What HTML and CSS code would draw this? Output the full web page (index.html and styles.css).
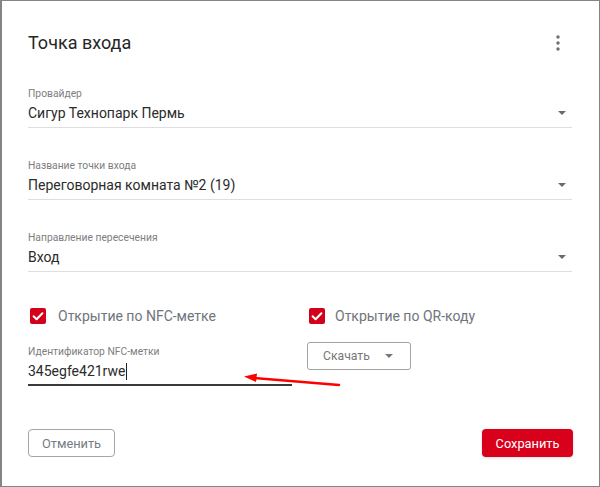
FILE: index.html
```html
<!DOCTYPE html>
<html lang="ru">
<head>
<meta charset="utf-8">
<title>Точка входа</title>
<link rel="stylesheet" href="styles.css">
</head>
<body>
<div class="dialog">
  <div class="head">
    <h1 class="title">Точка входа</h1>
    <svg class="kebab" width="4" height="16" viewBox="0 0 4 16"><circle cx="2" cy="2" r="1.7"/><circle cx="2" cy="8" r="1.7"/><circle cx="2" cy="14" r="1.7"/></svg>
  </div>

  <div class="field">
    <div class="label">Провайдер</div>
    <div class="value-row"><span class="value">Сигур Технопарк Пермь</span><span class="caret"></span></div>
  </div>
  <div class="field">
    <div class="label">Название точки входа</div>
    <div class="value-row"><span class="value">Переговорная комната №2 (19)</span><span class="caret"></span></div>
  </div>
  <div class="field">
    <div class="label">Направление пересечения</div>
    <div class="value-row"><span class="value">Вход</span><span class="caret"></span></div>
  </div>

  <div class="options">
    <div class="col">
      <label class="check">
        <svg class="box" width="16" height="16" viewBox="0 0 16 16"><rect width="16" height="16" rx="2"/><path d="M3.6 8.2l3 3 5.8-6"/></svg>
        <span>Открытие по NFC-метке</span>
      </label>
      <div class="nfc">
        <div class="label">Идентификатор NFC-метки</div>
        <div class="value-row"><span class="value">345egfe421rwe</span><span class="cursor"></span></div>
      </div>
    </div>
    <div class="col">
      <label class="check">
        <svg class="box" width="16" height="16" viewBox="0 0 16 16"><rect width="16" height="16" rx="2"/><path d="M3.6 8.2l3 3 5.8-6"/></svg>
        <span>Открытие по QR-коду</span>
      </label>
      <button class="download">Скачать <span class="mini-caret"></span></button>
    </div>
  </div>

  <div class="footer">
    <button class="btn-cancel">Отменить</button>
    <button class="btn-save">Сохранить</button>
  </div>

  <svg class="annot" width="600" height="487" viewBox="0 0 600 487">
    <path d="M339 385 L254 378" stroke="#f00" stroke-width="2.5" fill="none" stroke-linecap="round"/>
    <path d="M244 376.5 L257 373.5 L256 382 Z" fill="#f00"/>
  </svg>
</div>
</body>
</html>
```

FILE: styles.css
```css
html, body {
  margin: 0;
  padding: 0;
  background: #fff;
}
body {
  font-family: Roboto, "Noto Sans", "Liberation Sans", sans-serif;
  color: #333;
}
.dialog {
  position: relative;
  box-sizing: border-box;
  width: 600px;
  height: 487px;
  border: 1px solid #858585;
  border-left-width: 2px;
  padding: 30px 27px 29px 26px;
  display: flex;
  flex-direction: column;
}
.head {
  display: flex;
  justify-content: space-between;
  align-items: center;
  height: 24px;
  margin-bottom: 32px;
}
.title {
  margin: 0;
  font-size: 18px;
  line-height: 24px;
  font-weight: 400;
  color: #262626;
}
.kebab {
  fill: #6f6f6f;
  margin-right: 12px;
}
.field {
  border-bottom: 1px solid #dedede;
  padding-bottom: 4px;
  margin-bottom: 31px;
}
.field:nth-of-type(4) {
  margin-bottom: 34px;
}
.label {
  font-size: 10.3px;
  line-height: 14px;
  color: #7d7d7d;
  margin-bottom: 2px;
}
.value-row {
  display: flex;
  align-items: center;
  height: 20px;
}
.value {
  font-size: 14px;
  line-height: 20px;
  color: #2b2b2b;
}
.caret {
  margin-left: auto;
  margin-right: 6px;
  width: 0;
  height: 0;
  border-left: 4.5px solid transparent;
  border-right: 4.5px solid transparent;
  border-top: 4.5px solid #6a6a6a;
}
.options {
  display: grid;
  grid-template-columns: 264px 1fr;
  column-gap: 15px;
}
.check {
  display: flex;
  align-items: center;
  height: 20px;
  font-size: 14px;
  color: #6f757b;
}
.box {
  margin-left: 2px;
  margin-right: 12px;
}
.box rect { fill: #d3001c; }
.box path { fill: none; stroke: #fff; stroke-width: 2; stroke-linecap: round; stroke-linejoin: round; }
.col:nth-child(2) .check .box {
  margin-right: 10px;
}
.nfc {
  margin-top: 19px;
  border-bottom: 2px solid #3a3a3a;
  padding-bottom: 3px;
}
.cursor {
  display: inline-block;
  width: 1px;
  height: 17px;
  background: #222;
  margin-left: 1px;
}
.download {
  margin-top: 16px;
  box-sizing: border-box;
  width: 104px;
  height: 28px;
  border: 1px solid #a3a3a3;
  border-radius: 3px;
  background: #fff;
  font-family: inherit;
  font-size: 12.2px;
  color: #777;
  padding: 0 0 0 15px;
  display: flex;
  align-items: center;
  cursor: pointer;
}
.mini-caret {
  margin-left: 15px;
  width: 0;
  height: 0;
  border-left: 4px solid transparent;
  border-right: 4px solid transparent;
  border-top: 4px solid #777;
}
.footer {
  margin-top: auto;
  display: flex;
  justify-content: space-between;
  align-items: center;
}
.btn-cancel, .btn-save {
  box-sizing: border-box;
  height: 28px;
  border-radius: 4px;
  font-family: inherit;
  font-size: 12.8px;
  cursor: pointer;
  padding: 0;
}
.btn-cancel {
  width: 87px;
  background: #fff;
  border: 1px solid #a0a6ad;
  color: #767c83;
}
.btn-save {
  width: 91px;
  background: #d9001b;
  border: none;
  color: #fff;
  box-shadow: 0 1px 3px rgba(0,0,0,0.15);
  margin-right: -1px;
}
.annot {
  position: absolute;
  left: -2px;
  top: -1px;
  pointer-events: none;
}
```
